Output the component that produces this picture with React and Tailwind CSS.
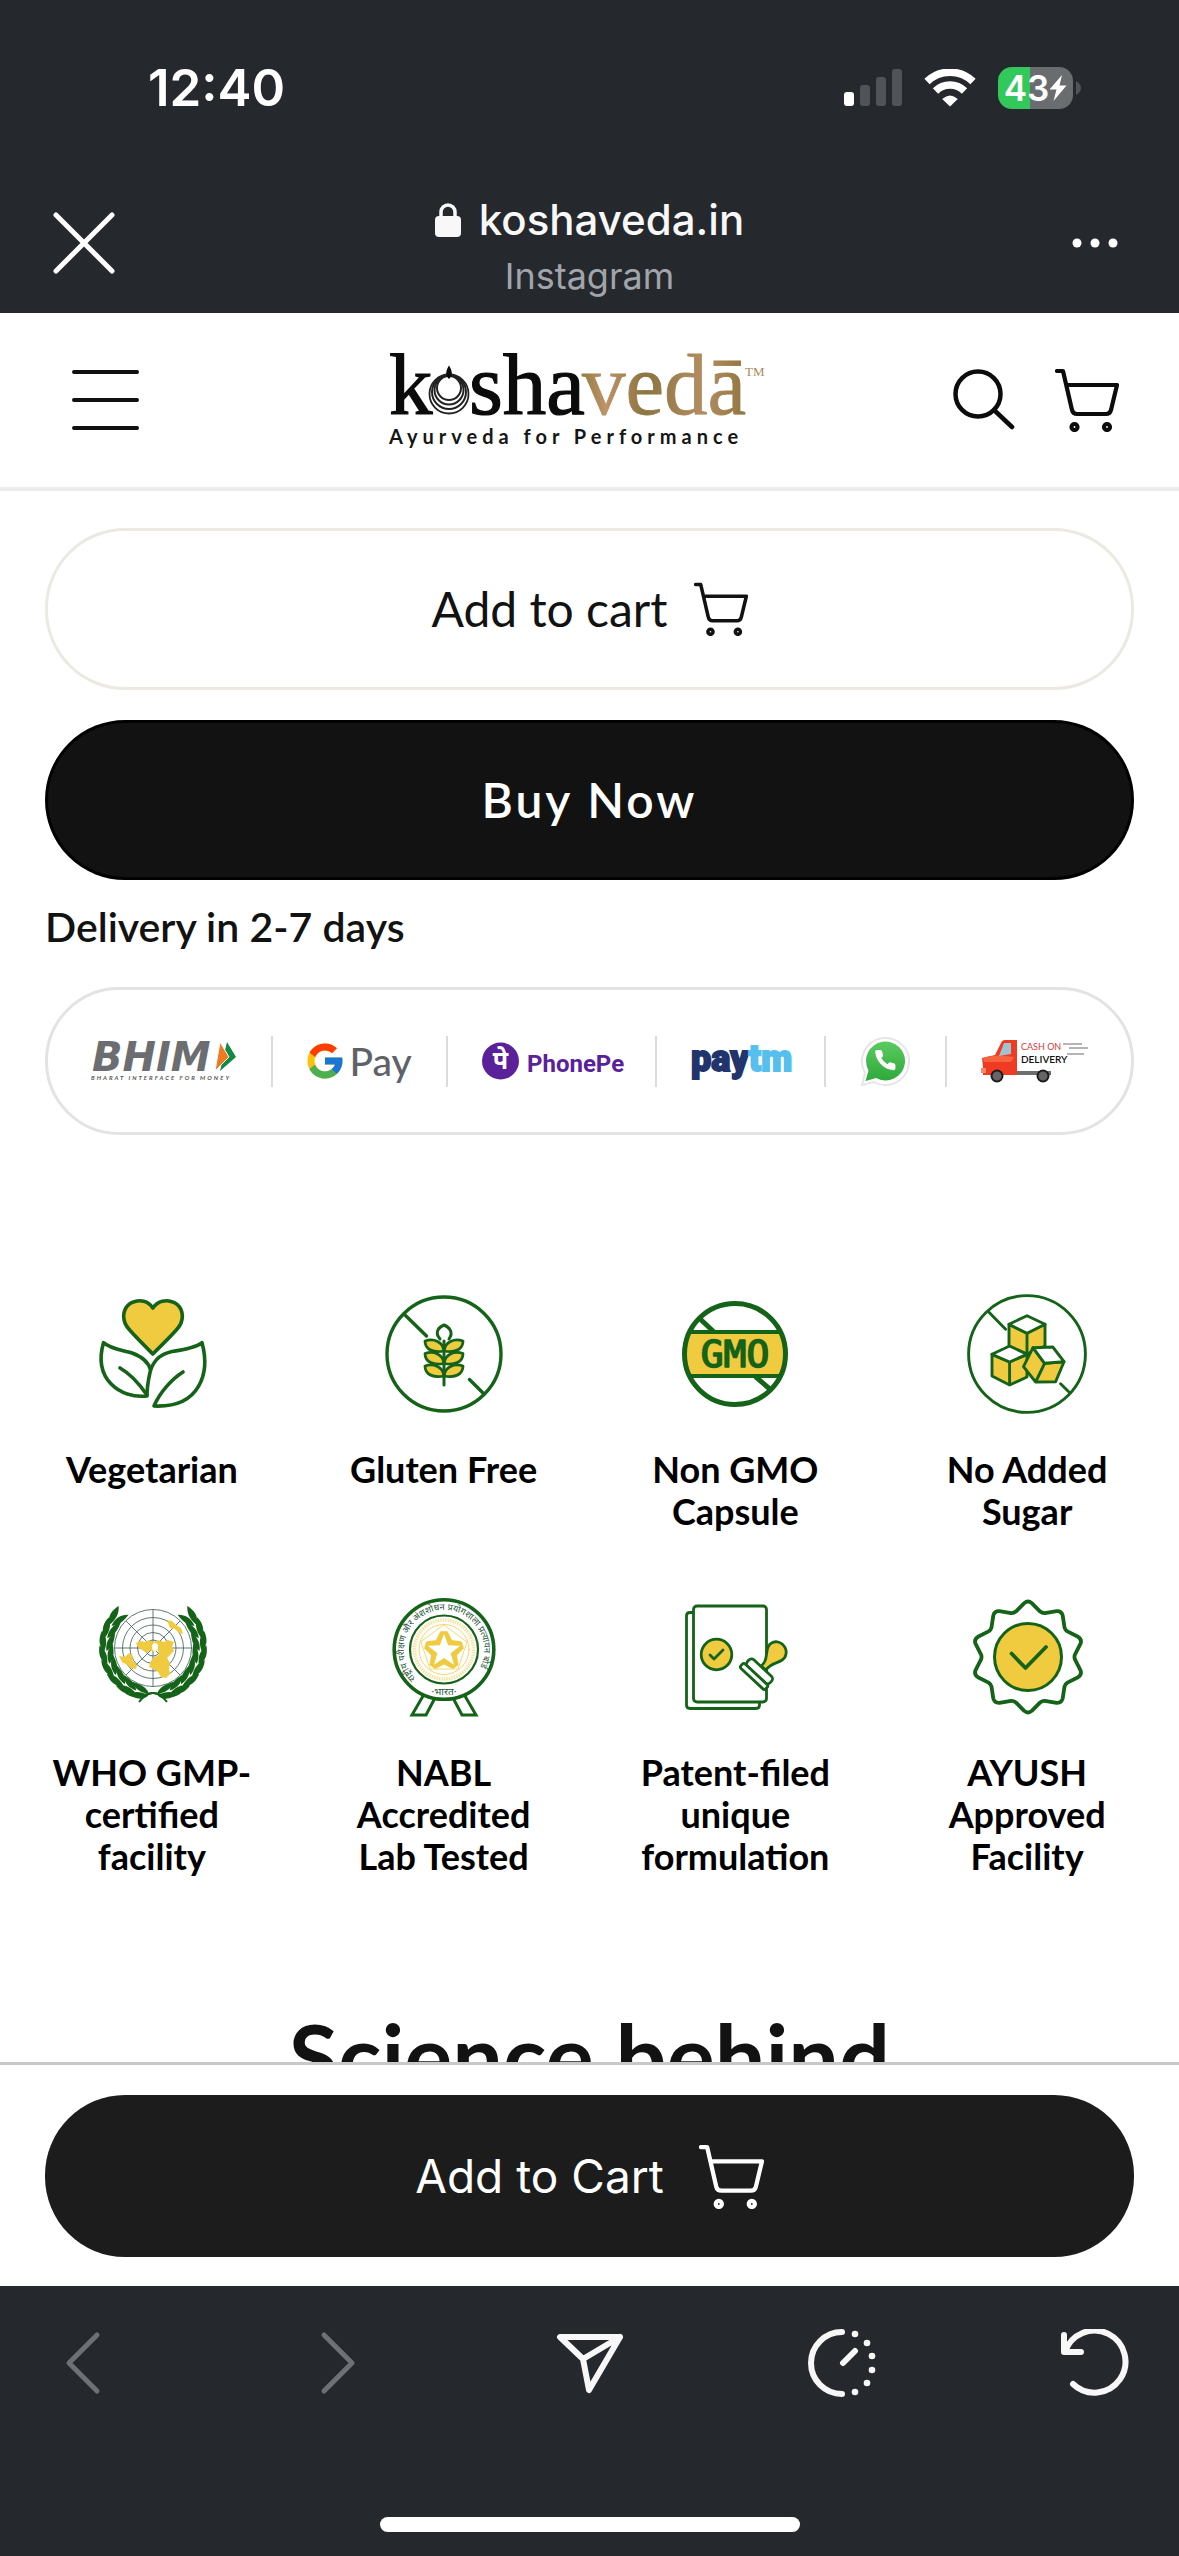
import React from "react";
import { FcGoogle } from "react-icons/fc";

const GREEN = "#146318";
const GOLD = "#f0cb40";

const outline = {
  fill: "none",
  stroke: GREEN,
  strokeLinecap: "round",
  strokeLinejoin: "round",
};

function CartIcon({ className }) {
  return (
    <svg viewBox="0 0 64 64" className={className} fill="none" stroke="currentColor" strokeWidth="4.2" strokeLinecap="round" strokeLinejoin="round" aria-hidden="true">
      <path d="M2 3H8L17 42Q18 46 22 46H51Q55 46 56 42L62 17H11.5" />
      <circle cx="19.5" cy="59" r="3" />
      <circle cx="52" cy="59" r="3" />
    </svg>
  );
}

/* ---------- status bar ---------- */

function StatusBar() {
  return (
    <div className="flex items-center justify-between pt-[56px] pr-[98px] pl-[148px]">
      <span className="text-[51px] leading-[64px] font-semibold">12:40</span>
      <div className="flex items-center gap-[22px]">
        <svg className="h-[38px] w-[58px]" viewBox="0 0 58 38" aria-label="Signal">
          <rect x="0" y="23" width="10" height="14" rx="3" fill="#fff" />
          <rect x="16" y="16" width="10" height="21" rx="3" fill="#505357" />
          <rect x="32" y="8" width="10" height="29" rx="3" fill="#505357" />
          <rect x="48" y="0" width="10" height="37" rx="3" fill="#505357" />
        </svg>
        <svg className="h-[38px] w-[52px]" viewBox="0 0 52 38" fill="none" stroke="#fff" strokeWidth="7.5" aria-label="Wi-Fi">
          <path d="M3 12.5A33 33 0 0 1 49 12.5" />
          <path d="M11.5 22A20.5 20.5 0 0 1 40.5 22" />
          <path d="M26 37.5L18.2 30Q26 23 33.8 30Z" fill="#fff" stroke="none" />
        </svg>
        <div className="flex h-[42px] items-center">
          <div className="flex h-[42px] w-[75px] items-center justify-center rounded-[14px] bg-[linear-gradient(90deg,#33c85a_43%,#6a6d70_43%)]">
            <span className="text-[35px] leading-none font-semibold">43</span>
            <svg className="h-[26px] w-[18px] shrink-0" viewBox="0 0 18 26" fill="#fff" aria-hidden="true">
              <path d="M13 0L0.5 14.5H7.5L4.5 26L17.5 10.5H10.5Z" />
            </svg>
          </div>
          <svg className="ml-[3px] h-[14px] w-[5px]" viewBox="0 0 5 14" fill="#505357" aria-hidden="true">
            <path d="M0 0Q5 3 5 7T0 14Z" />
          </svg>
        </div>
      </div>
    </div>
  );
}

function BrowserHeader() {
  return (
    <div className="grid grid-cols-[1fr_auto_1fr] items-center px-[52px] pt-[68px] pb-[15px]">
      <button type="button" aria-label="Close" className="justify-self-start">
        <svg className="h-[64px] w-[64px]" viewBox="0 0 64 64" fill="none" stroke="#fff" strokeWidth="5" strokeLinecap="round">
          <path d="M4 4L60 60M60 4L4 60" />
        </svg>
      </button>
      <div className="flex flex-col items-center pt-[6px]">
        <div className="flex items-center gap-[18px]">
          <svg className="h-[34px] w-[26px]" viewBox="0 0 26 34" aria-label="Secure">
            <rect x="0" y="13" width="26" height="21" rx="4" fill="#f8f8f8" />
            <path d="M6 14V9a7 7 0 0 1 14 0v5" fill="none" stroke="#f8f8f8" strokeWidth="3.5" />
          </svg>
          <span className="text-[42px] leading-[52px] font-medium text-[#f8f8f8]">koshaveda.in</span>
        </div>
        <span className="mt-[8px] text-[36px] leading-[44px] text-[#a1a4ab]">Instagram</span>
      </div>
      <button type="button" aria-label="More" className="justify-self-end pr-[9px]">
        <svg className="h-[12px] w-[46px]" viewBox="0 0 46 12" fill="#fff">
          <circle cx="5" cy="6" r="4.5" />
          <circle cx="23" cy="6" r="4.5" />
          <circle cx="41" cy="6" r="4.5" />
        </svg>
      </button>
    </div>
  );
}

/* ---------- site header ---------- */

function Logo() {
  return (
    <svg className="h-[100px] w-[374px] overflow-visible" viewBox="0 0 374 100" role="img" aria-label="koshaveda, Ayurveda for Performance">
      <defs>
        <linearGradient id="bronze" gradientUnits="userSpaceOnUse" x1="190" y1="0" x2="356" y2="0">
          <stop offset="0" stopColor="#8f7a3f" />
          <stop offset="0.16" stopColor="#bf9268" />
          <stop offset="0.4" stopColor="#8c7440" />
          <stop offset="0.75" stopColor="#b38d62" />
          <stop offset="1" stopColor="#91773f" />
        </linearGradient>
      </defs>
      <g fontFamily="'Liberation Serif', serif" fontSize="87">
        <g fill="#0b0b0b" stroke="#0b0b0b" strokeWidth="1.2">
          <text x="0" y="64">k</text>
          <text x="80" y="64">sha</text>
        </g>
        <text x="193" y="64" fill="url(#bronze)" stroke="url(#bronze)" strokeWidth="0.8">vedā</text>
      </g>
      <g fill="none" stroke="#222">
        <circle cx="60" cy="44" r="19.5" strokeWidth="1.8" />
        <circle cx="60" cy="42" r="17" strokeWidth="2" />
        <circle cx="60" cy="40" r="14.5" strokeWidth="2" />
        <circle cx="60" cy="38" r="12" strokeWidth="2" />
      </g>
      <path d="M60 17C57 22 57 25 60 28C63 25 63 22 60 17Z" fill="#0b0b0b" stroke="#0b0b0b" strokeWidth="1.5" />
      <text x="356" y="26" fontFamily="'Liberation Serif', serif" fontSize="13" fill="#a98a5a">TM</text>
      <text x="0" y="94" fontFamily="Lato, sans-serif" fontSize="20" fontWeight="700" letterSpacing="5" fill="#161616">Ayurveda for Performance</text>
    </svg>
  );
}

function SiteHeader() {
  return (
    <header className="grid grid-cols-[1fr_auto_1fr] items-center border-b-4 border-[#ececec] py-[37px] pr-[60px] pl-[32px]">
      <button type="button" aria-label="Menu" className="ml-[40px] justify-self-start">
        <svg className="h-[62px] w-[67px]" viewBox="0 0 67 62" stroke="#111" strokeWidth="4" strokeLinecap="round">
          <path d="M2 3H65M2 31H65M2 59H65" />
        </svg>
      </button>
      <a href="#home"><Logo /></a>
      <div className="flex items-center gap-[40px] justify-self-end text-[#0c0c0c]">
        <button type="button" aria-label="Search">
          <svg className="h-[62px] w-[62px]" viewBox="0 0 62 62" fill="none" stroke="currentColor" strokeWidth="4.5" strokeLinecap="round">
            <circle cx="25" cy="25" r="22.5" />
            <path d="M41 41L59 58" />
          </svg>
        </button>
        <button type="button" aria-label="Cart"><CartIcon className="h-[64px] w-[64px]" /></button>
      </div>
    </header>
  );
}

/* ---------- payment logos ---------- */

function BhimLogo() {
  return (
    <svg className="h-[42px] w-[146px] overflow-visible" viewBox="0 0 146 42" role="img" aria-label="BHIM">
      <text x="1" y="31" fontFamily="'DejaVu Sans', sans-serif" fontSize="40" fontWeight="700" fontStyle="italic" fill="#6b6d70">BHIM</text>
      <path d="M136 2L145 17L129 31Z" fill="#128a43" />
      <path d="M129 2L138 17L124 31Z" fill="#ee7a22" stroke="#fff" strokeWidth="1" />
      <text x="0" y="40" fontFamily="Lato, sans-serif" fontSize="6" fontStyle="italic" fontWeight="700" letterSpacing="2" fill="#555">BHARAT INTERFACE FOR MONEY</text>
    </svg>
  );
}

function PhonePeLogo() {
  return (
    <svg className="h-[40px] w-[138px] overflow-visible" viewBox="0 0 138 40" role="img" aria-label="PhonePe">
      <circle cx="18.5" cy="20" r="18.5" fill="#5a219b" />
      <text x="18.5" y="28" textAnchor="middle" fontFamily="'Noto Sans', 'Noto Sans Devanagari', sans-serif" fontSize="25" fontWeight="700" fill="#fff">पे</text>
      <text x="45" y="31" fontFamily="Roboto, sans-serif" fontSize="24" fontWeight="700" fill="#5a219b">PhonePe</text>
    </svg>
  );
}

function PaytmLogo() {
  return (
    <svg className="h-[42px] w-[99px] overflow-visible" viewBox="0 0 99 42" role="img" aria-label="Paytm">
      <text x="0" y="31" fontFamily="Roboto, sans-serif" fontSize="36" fontWeight="900" strokeWidth="1.8">
        <tspan fill="#22346c" stroke="#22346c">pay</tspan>
        <tspan fill="#56bfee" stroke="#56bfee">tm</tspan>
      </text>
    </svg>
  );
}

function WhatsAppLogo() {
  return (
    <svg className="h-[52px] w-[50px]" viewBox="0 0 50 52" role="img" aria-label="WhatsApp">
      <defs>
        <linearGradient id="chat" x1="0" y1="0" x2="0" y2="1">
          <stop offset="0" stopColor="#5bcb62" />
          <stop offset="1" stopColor="#2fa83b" />
        </linearGradient>
      </defs>
      <path d="M2 50L5 38A23.5 23.5 0 1 1 14 47Z" fill="#fff" stroke="#e6e6e6" strokeWidth="2" />
      <path d="M5.5 46L8.5 35.5A19.5 19.5 0 1 1 16 43Z" fill="url(#chat)" />
      <path transform="translate(13 13) scale(1.02)" fill="#fff" d="M22 16.92v3a2 2 0 0 1-2.18 2 19.79 19.79 0 0 1-8.63-3.07 19.5 19.5 0 0 1-6-6 19.79 19.79 0 0 1-3.07-8.67A2 2 0 0 1 4.11 2h3a2 2 0 0 1 2 1.72c.127.96.361 1.903.7 2.81a2 2 0 0 1-.45 2.11L8.09 9.91a16 16 0 0 0 6 6l1.27-1.27a2 2 0 0 1 2.11-.45c.907.339 1.85.573 2.81.7A2 2 0 0 1 22 16.92z" />
    </svg>
  );
}

function CashOnDeliveryLogo() {
  return (
    <svg className="h-[44px] w-[107px] overflow-visible" viewBox="0 0 107 44" role="img" aria-label="Cash on delivery">
      <path d="M28 32H70V36H28Z" fill="#6e6e6e" />
      <path d="M24 1H36V36H2V28L1 19L14 16L20 4Q21 1 24 1Z" fill="#f03a23" />
      <path d="M2 19Q12 15 33 18L30 23H3Z" fill="#f7623f" />
      <path d="M23 4H30V15L18 17Z" fill="#9fc3cf" />
      <path d="M0 29H5V34H0Z" fill="#f58a6a" />
      <g fill="#666" stroke="#1c1c1c" strokeWidth="2">
        <circle cx="16" cy="37" r="5.5" />
        <circle cx="62" cy="37" r="5.5" />
      </g>
      <text x="40" y="11" fontFamily="Lato, sans-serif" fontSize="9" fill="#d33a3a">CASH ON</text>
      <text x="40" y="24" fontFamily="Lato, sans-serif" fontSize="10" fontWeight="600" fill="#111">DELIVERY</text>
      <path d="M82 5H101M88 9H107M86 15H103" stroke="#6b6b6b" strokeWidth="1" />
    </svg>
  );
}

function Divider() {
  return <li aria-hidden="true" className="h-[51px] w-[2px] bg-[#dcdcdc]" />;
}

function PaymentMethods() {
  return (
    <ul className="mt-[33px] flex items-center justify-between rounded-full border-[3px] border-[#e3e3e3] px-[43px] py-[45px]">
      <li><BhimLogo /></li>
      <Divider />
      <li className="flex items-center gap-[4px]" aria-label="Google Pay">
        <FcGoogle className="-ml-[4px] h-[42px] w-[42px]" />
        <span className="text-[39px] leading-[42px] font-medium text-[#5f6368]">Pay</span>
      </li>
      <Divider />
      <li><PhonePeLogo /></li>
      <Divider />
      <li><PaytmLogo /></li>
      <Divider />
      <li><WhatsAppLogo /></li>
      <Divider />
      <li><CashOnDeliveryLogo /></li>
    </ul>
  );
}

/* ---------- feature icons, each on a 120-unit square ---------- */

function VegetarianIcon() {
  return (
    <g {...outline} strokeWidth="3.6">
      <path d="M60.8 14C56 6 47 6 43 7.5C33 10 29.5 20 33 29C34.5 33 37 36 60.8 60C85 36 87.5 33 89 29C92.5 20 89 10 79 7.5C75 6 66 6 60.8 14Z" fill={GOLD} />
      <path d="M11.5 48.7C20 56 32 56 40 59C51 63 57 70 58.6 76C57 83 55 90 55 102C28 105 1 85 11.5 48.7Z" />
      <path d="M28 74Q42 82 55 101" />
      <path d="M58.6 76C63 64 70 60 80 57.5C90 56 103 54 110 48.7C118 78 109 114 62 112C68 98 80 85 91 78" />
    </g>
  );
}

function GlutenFreeIcon() {
  return (
    <g {...outline} strokeWidth="3.4">
      <circle cx="60" cy="60" r="57" />
      <path d="M20 20L42.5 42M85.5 85.5L99.5 99.5" />
      <path d="M56 45C50 38 55 33 60 31C65 33 70 38 65 45" strokeWidth="3" />
      {[57, 69.5, 82].map((y) => (
        <g key={y} transform={`translate(60 ${y})`} fill={GOLD} strokeWidth="2.8">
          <path d="M0 0C-10 2 -19 -1 -19 -10C-10 -13 -1 -9 0 0Z" />
          <path d="M0 0C10 2 19 -1 19 -10C10 -13 1 -9 0 0Z" />
        </g>
      ))}
      <path d="M60 47V91" strokeWidth="3" />
    </g>
  );
}

function NonGmoIcon() {
  return (
    <g {...outline}>
      <clipPath id="gmoDisc"><circle cx="60" cy="60" r="50" /></clipPath>
      <g clipPath="url(#gmoDisc)">
        <path d="M23 23L39 38M81 83L97 97" strokeWidth="5" />
        <path d="M0 38H120V82H0Z" fill={GOLD} strokeWidth="4" />
      </g>
      <circle cx="60" cy="60" r="50.5" strokeWidth="5" />
      <text x="60" y="73" textAnchor="middle" fontFamily="'DejaVu Sans Mono', monospace" fontSize="38" fill={GREEN} strokeWidth="1.6">GMO</text>
    </g>
  );
}

function NoSugarIcon() {
  return (
    <g {...outline} strokeWidth="2.9">
      <circle cx="60" cy="60" r="58.4" />
      <path d="M21.5 17.7L38.6 35.3M93.6 89.7L103 99" />
      <g fill={GOLD}>
        <path d="M42 30.3L60 39.3V60L42 52ZM78 30.3L60 39.3V60L78 52Z" />
        <path d="M42 30.3L60 21.7L78 30.3L60 39.3Z" fill="#fff" />
        <path d="M25 60.3L42.6 68V91L25 82ZM60 60.3L42.6 68V91L60 83Z" />
        <path d="M25 60.3L42.6 52L60 60.3L42.6 68Z" fill="#fff" />
        <path d="M66 53.7L77.6 69.3L68.6 88L56.5 72.7ZM77.6 69.3L97 67.7L88.6 87.7L68.6 88Z" />
        <path d="M66 53.7L85.8 53L97 67.7L77.6 69.3Z" fill="#fff" />
      </g>
    </g>
  );
}

const laurelSteps = [0, 1, 2, 3, 4, 5, 6, 7];

function LaurelHalf() {
  return (
    <g fill={GREEN}>
      {laurelSteps.map((i) => {
        const deg = 217 - i * 16;
        const a = (deg * Math.PI) / 180;
        const x = 61 + 47 * Math.cos(a);
        const y = 50 + 47 * Math.sin(a);
        return (
          <g key={i} transform={`translate(${x} ${y}) rotate(${deg + 180})`}>
            <path d="M-1 8C-8 4 -8 -5 -5 -12C0 -6 1 0 -1 8Z" />
            <path d="M1 8C7 4 8 -4 8 -11C2 -7 -1 0 1 8Z" />
          </g>
        );
      })}
      <path d="M34 96C46 104 53 95 62 96C68 97 72 101 75 105" fill="none" stroke={GREEN} strokeWidth="2" />
    </g>
  );
}

function WhoGmpIcon() {
  return (
    <g>
      <g transform="translate(122 0) scale(-1 1)"><LaurelHalf /></g>
      <LaurelHalf />
      <g fill="none" stroke="#4f6a63" strokeWidth="0.9">
        <circle cx="61" cy="51" r="38.5" fill="#fff" />
        <circle cx="61" cy="51" r="30.5" />
        <circle cx="61" cy="51" r="23" />
        <circle cx="61" cy="51" r="15.5" />
        <circle cx="61" cy="51" r="8" />
        <path d="M61 12.5V89.5M22.5 51H99.5M34 24L88 78M88 24L34 78" />
      </g>
      <g fill={GOLD}>
        <path d="M44 46L48 44L53 45L57 43L62 45L66 43L72 45L76 43L82 45L80 50L82 54L78 58L75 61L78 66L77 72L78 77L74 81L69 80L66 75L62 72L57 70L59 64L62 60L67 58L66 53L61 55L58 53L55 56L50 53L46 50Z" />
        <path d="M27 59L33 60L37 56L41 59L40 63L45 68L44 72L39 71L35 68L30 65Z" />
        <path d="M75 23L80 24L84 28L89 31L91 37L87 36L83 32L78 31Z" />
      </g>
      <ellipse cx="63" cy="50" rx="3" ry="4" fill="#fff" />
    </g>
  );
}

function starPoints(cx, cy, outer, inner) {
  return Array.from({ length: 10 }, (_, i) => {
    const r = i % 2 ? inner : outer;
    const a = ((i * 36 - 90) * Math.PI) / 180;
    return `${cx + r * Math.cos(a)},${cy + r * Math.sin(a)}`;
  }).join(" ");
}

function NablIcon() {
  return (
    <g {...outline}>
      <path d="M39 99L28 118H42L52 99M81 99L92 118H78L68 99" strokeWidth="3" strokeLinejoin="miter" />
      <circle cx="60" cy="52.5" r="49.8" strokeWidth="3.6" fill="#fff" />
      <circle cx="60" cy="52.5" r="34" strokeWidth="2.2" />
      <circle cx="60" cy="52.5" r="29.5" stroke="#f6e3a0" strokeWidth="3.5" strokeDasharray="1.5 1" strokeLinecap="butt" />
      <circle cx="60" cy="52.5" r="25" stroke={GOLD} strokeWidth="0.8" />
      <path d="M60 28L83 45L74 72H46L37 45Z" stroke="#f3d979" strokeWidth="1" />
      <polygon points={starPoints(60, 54, 18, 9)} stroke={GOLD} strokeWidth="8" strokeLinejoin="bevel" />
      <polygon points={starPoints(60, 54, 17, 7)} fill="#fff" stroke="none" />
      <path id="sealArc" d="M31.7 81.3A40 40 0 1 1 88.3 81.3" stroke="none" />
      <g fill="#24553a" stroke="none" fontFamily="'Noto Sans', 'Noto Sans Devanagari', sans-serif">
        <text fontSize="9"><textPath href="#sealArc">राष्ट्रीय परीक्षण और अंशशोधन प्रयोगशाला प्रत्यायन बोर्ड</textPath></text>
        <text x="60" y="98" textAnchor="middle" fontSize="10">·भारत·</text>
      </g>
    </g>
  );
}

function PatentIcon() {
  return (
    <g {...outline} strokeWidth="2.8">
      <path d="M18 15.5H15Q11.5 15.5 11.5 19V108Q11.5 111.5 15 111.5H81Q84.5 111.5 84.5 108V105.5" />
      <rect x="18.5" y="9" width="73" height="96" rx="3.5" fill="#fff" />
      <circle cx="41.5" cy="57.5" r="15.3" fill={GOLD} />
      <path d="M35 58L39 62L48 53" />
      <path d="M86 69C91 65 91 61 92 54C93 46 99 44 103 45C110 47 113 54 110 60C106 67 97 64 91 73Z" fill={GOLD} />
      <g transform="rotate(43 82.5 76.5)" fill="#fff">
        <rect x="67" y="69" width="31" height="9" rx="3.5" />
        <rect x="65" y="78" width="34" height="6" rx="2" />
      </g>
    </g>
  );
}

function sealPath(cx, cy, peak, valley) {
  const at = (r, deg) => {
    const a = (deg * Math.PI) / 180;
    return `${cx + r * Math.cos(a)} ${cy + r * Math.sin(a)}`;
  };
  let d = "";
  for (let i = 0; i < 10; i++) {
    const deg = i * 36 - 90;
    d += `${i ? "L" : "M"}${at(peak - 2, deg - 4)}Q${at(peak + 1, deg)} ${at(peak - 2, deg + 4)}`;
    d += `L${at(valley + 1, deg + 15)}Q${at(valley, deg + 18)} ${at(valley + 1, deg + 21)}`;
  }
  return d + "Z";
}

function AyushIcon() {
  return (
    <g {...outline}>
      <path d={sealPath(61, 60, 56, 46)} strokeWidth="3.8" />
      <circle cx="61" cy="60" r="33.5" fill={GOLD} strokeWidth="3" />
      <path d="M44.5 56.5L58.5 71L79 50" strokeWidth="3.8" />
    </g>
  );
}

const features = [
  { lines: ["Vegetarian"], Icon: VegetarianIcon },
  { lines: ["Gluten Free"], Icon: GlutenFreeIcon },
  { lines: ["Non GMO", "Capsule"], Icon: NonGmoIcon },
  { lines: ["No Added", "Sugar"], Icon: NoSugarIcon },
  { lines: ["WHO GMP-", "certified", "facility"], Icon: WhoGmpIcon },
  { lines: ["NABL", "Accredited", "Lab Tested"], Icon: NablIcon },
  { lines: ["Patent-filed", "unique", "formulation"], Icon: PatentIcon },
  { lines: ["AYUSH", "Approved", "Facility"], Icon: AyushIcon },
];

function Features() {
  return (
    <ul className="mt-[159px] grid grid-cols-4 gap-y-[65px] px-[6px]">
      {features.map(({ lines, Icon }) => (
        <li key={lines[0]} className="flex flex-col items-center">
          <svg className="h-[120px] w-[120px]" viewBox="0 0 120 120" aria-hidden="true"><Icon /></svg>
          <p className="mt-[34px] text-center text-[36px] leading-[42px] font-bold text-black">
            {lines.map((line) => <span key={line} className="block">{line}</span>)}
          </p>
        </li>
      ))}
    </ul>
  );
}

/* ---------- bottom toolbar ---------- */

const dots = [[47, 5], [59, 14], [64, 27], [64, 41], [59, 54], [47, 63]];

function BrowserToolbar() {
  const icon = "h-[68px] w-[68px]";
  const stroke = { fill: "none", stroke: "currentColor", strokeLinecap: "round", strokeLinejoin: "round" };
  return (
    <nav aria-label="Browser" className="shrink-0 bg-[#25282d] pt-[43px] pb-[24px] text-[#f7f7f7]">
      <div className="flex justify-between px-[50px]">
        <button type="button" aria-label="Back" className="text-[#6d7074]">
          <svg className={icon} viewBox="0 0 68 68" {...stroke} strokeWidth="5"><path d="M47 6L19 34L47 62" /></svg>
        </button>
        <button type="button" aria-label="Forward" className="text-[#6d7074]">
          <svg className={icon} viewBox="0 0 68 68" {...stroke} strokeWidth="5"><path d="M21 6L49 34L21 62" /></svg>
        </button>
        <button type="button" aria-label="Share">
          <svg className={icon} viewBox="0 0 68 68" {...stroke} strokeWidth="6"><path d="M4 8H64L33 61L27 30ZM27 30L64 8" /></svg>
        </button>
        <button type="button" aria-label="Activity">
          <svg className={icon} viewBox="0 0 68 68" {...stroke} strokeWidth="6">
            <path d="M34 3A31 31 0 0 0 34 65M35 34L47 22" />
            {dots.map(([x, y]) => <circle key={`${x}-${y}`} cx={x} cy={y} r="3.3" fill="currentColor" stroke="none" />)}
          </svg>
        </button>
        <button type="button" aria-label="Reload">
          <svg className={icon} viewBox="0 0 68 68" {...stroke} strokeWidth="6"><path d="M3 6V23H20M4 23A31 31 0 1 1 12 55" /></svg>
        </button>
      </div>
      <div className="mx-auto mt-[120px] h-[15px] w-[420px] rounded-full bg-white" />
    </nav>
  );
}

export default function App() {
  return (
    <div className="flex h-screen flex-col overflow-hidden bg-white font-['Lato',sans-serif] text-[#121212]">
      <div className="shrink-0 bg-[#25282d] font-['Inter',sans-serif] text-white">
        <StatusBar />
        <BrowserHeader />
      </div>
      <div className="shrink-0"><SiteHeader /></div>
      <main className="min-h-0 flex-1 overflow-hidden pt-[37px]">
        <section className="px-[45px]">
          <button type="button" className="flex h-[162px] w-full items-center justify-center gap-[26px] rounded-[80px] border-[3px] border-[#ece9e1] text-[48px]">
            Add to cart
            <CartIcon className="h-[54px] w-[54px]" />
          </button>
          <button type="button" className="mt-[30px] flex h-[160px] w-full items-center justify-center rounded-[80px] border-[3px] border-black bg-[#121212] text-[48px] font-semibold tracking-[3px] text-white">
            Buy Now
          </button>
          <p className="mt-[20px] text-[41px] leading-[54px] font-semibold">Delivery in 2-7 days</p>
          <PaymentMethods />
        </section>
        <Features />
        <h2 className="mt-[124px] text-center text-[90px] leading-[108px] font-bold">Science behind</h2>
      </main>
      <div className="shrink-0 border-t-[3px] border-[#c8c8c8] bg-white px-[45px] pt-[30px] pb-[29px]">
        <button type="button" className="flex h-[162px] w-full items-center justify-center gap-[35px] rounded-[80px] bg-[#1c1c1c] font-['Inter',sans-serif] text-[46px] text-white">
          Add to Cart
          <CartIcon className="h-[65px] w-[65px]" />
        </button>
      </div>
      <BrowserToolbar />
    </div>
  );
}
